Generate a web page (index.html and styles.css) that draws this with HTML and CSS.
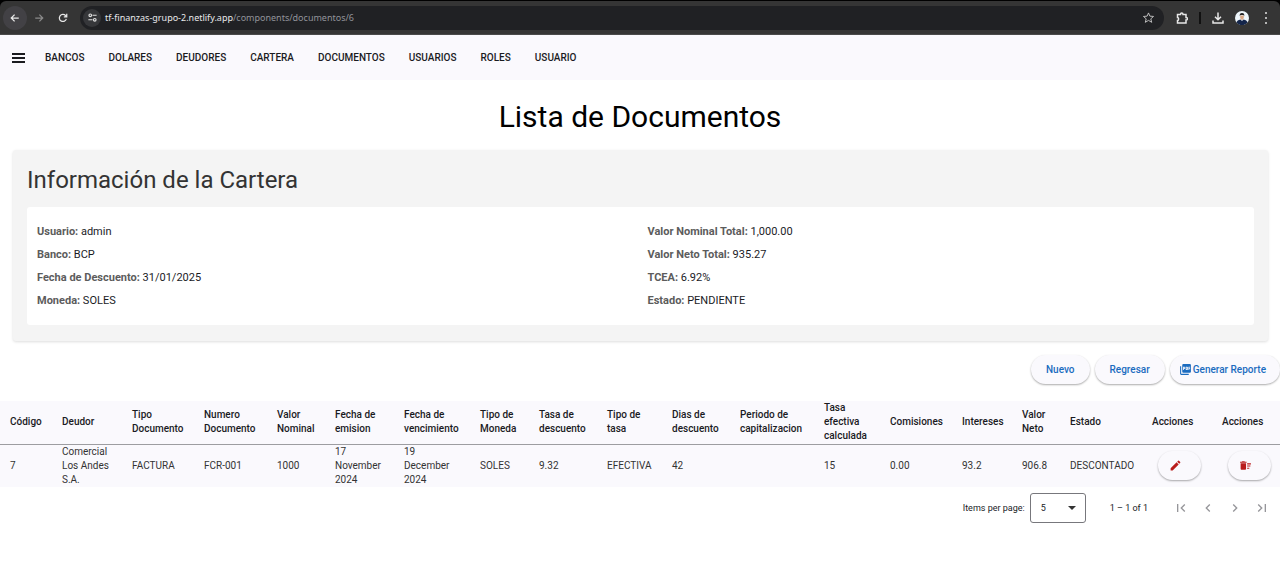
FILE: index.html
```html
<!DOCTYPE html>
<html lang="es">
<head>
<meta charset="utf-8">
<title>Lista de Documentos</title>
<link rel="stylesheet" href="styles.css">
</head>
<body>
<div class="browser">
  <div class="browser-bar">
    <button class="tool tool-back" aria-label="Atrás"><svg viewBox="0 0 24 24"><path d="M21 12H4M11 4l-8 8 8 8"/></svg></button>
    <button class="tool tool-dim" aria-label="Adelante"><svg viewBox="0 0 24 24"><path d="M3 12h17M13 4l8 8-8 8"/></svg></button>
    <button class="tool" aria-label="Recargar"><svg viewBox="0 0 24 24"><path d="M20 14a8.500 8.500 0 1 1-2-8l3 3M21 2v7h-7"/></svg></button>
    <div class="address">
      <button class="site-info" aria-label="Información del sitio"><svg viewBox="0 0 24 24"><circle cx="6" cy="6" r="3.500"/><path d="M12 6h11M1 18h11"/><circle cx="18" cy="18" r="3.500"/></svg></button>
      <span class="url"><span class="host">tf-finanzas-grupo-2.netlify.app</span>/components/documentos/6</span>
      <button class="star" aria-label="Marcador"><svg viewBox="0 0 24 24"><path d="M12 2l3 7 8 .7-6 5.200 2 7.600-7-4.200-7 4.200 2-7.600-6-5.200L9 9z"/></svg></button>
    </div>
    <button class="tool tool-ext" aria-label="Extensiones"><svg viewBox="0 0 24 24"><path d="M3 5h6c0-4 5-4 5 0h6v6c4 0 4 5 0 5v6H3v-5c3 0 3-6 0-6z"/></svg></button>
    <span class="divider"></span>
    <button class="tool tool-down" aria-label="Descargas"><svg viewBox="0 0 24 24"><path d="M12 1v14M6 9.500l6 6 6-6M2 17v5h20v-5"/></svg></button>
    <button class="avatar" aria-label="Perfil"><svg viewBox="0 0 14 14"><circle cx="7" cy="7" r="7" fill="#eef6fb"/><path d="M1.500 11.500Q2 9 5.500 8.500L7 10l1.500-1.500Q12 9 12.500 11.500A7 7 0 0 1 1.500 11.500z" fill="#14254a"/><path d="M5.200 4.500h3.600v2.200Q8.500 8.600 7 9 5.500 8.600 5.200 6.700z" fill="#d9a987"/><path d="M4.800 5.200Q4.300 2 7 2t2.200 3.200L8.500 4h-3z" fill="#222"/></svg></button>
    <button class="kebab" aria-label="Menú"><svg viewBox="0 0 4 14"><circle cx="2" cy="2" r="1"/><circle cx="2" cy="7" r="1"/><circle cx="2" cy="12" r="1"/></svg></button>
  </div>
</div>
<nav class="nav">
  <button class="menu" aria-label="Abrir menú"><svg viewBox="0 0 13 10"><path d="M0 1h13M0 5h13M0 9h13"/></svg></button>
  <a href="#">BANCOS</a><a href="#">DOLARES</a><a href="#">DEUDORES</a><a href="#">CARTERA</a><a href="#">DOCUMENTOS</a><a href="#">USUARIOS</a><a href="#">ROLES</a><a href="#">USUARIO</a>
</nav>
<main>
  <h1>Lista de Documentos</h1>
  <section class="card">
    <h2>Información de la Cartera</h2>
    <div class="info">
      <div class="info-col">
        <p><strong>Usuario:</strong> admin</p>
        <p><strong>Banco:</strong> BCP</p>
        <p><strong>Fecha de Descuento:</strong> 31/01/2025</p>
        <p><strong>Moneda:</strong> SOLES</p>
      </div>
      <div class="info-col">
        <p><strong>Valor Nominal Total:</strong> 1,000.00</p>
        <p><strong>Valor Neto Total:</strong> 935.27</p>
        <p><strong>TCEA:</strong> 6.92%</p>
        <p><strong>Estado:</strong> PENDIENTE</p>
      </div>
    </div>
  </section>
  <div class="actions">
    <button class="pill">Nuevo</button>
    <button class="pill">Regresar</button>
    <button class="pill pill-icon"><svg viewBox="0 0 24 24"><path fill="currentColor" fill-rule="evenodd" d="M20 2H8a2 2 0 0 0-2 2v12a2 2 0 0 0 2 2h12a2 2 0 0 0 2-2V4a2 2 0 0 0-2-2zm-8.500 7.500A1.500 1.500 0 0 1 10 11H9v2H7.500V7H10a1.500 1.500 0 0 1 1.500 1.500zm5 2A1.500 1.500 0 0 1 15 13h-2.500V7H15a1.500 1.500 0 0 1 1.500 1.500zm4-3H19v1h1.500V11H19v2h-1.500V7h3zM9 9.500h1v-1H9zM4 6H2v14a2 2 0 0 0 2 2h14v-2H4zm10 5.500h1v-3h-1z"/></svg>Generar Reporte</button>
  </div>
  <table class="docs">
    <colgroup>
      <col class="c-code"><col class="c-debtor"><col class="c-type"><col class="c-number"><col class="c-nominal"><col class="c-issue"><col class="c-due"><col class="c-currency"><col class="c-rate"><col class="c-ratetype"><col class="c-days"><col class="c-period"><col class="c-effective"><col class="c-fees"><col class="c-interest"><col class="c-net"><col class="c-state"><col class="c-edit"><col class="c-delete">
    </colgroup>
    <thead>
      <tr><th>Código</th><th>Deudor</th><th>Tipo Documento</th><th>Numero Documento</th><th>Valor Nominal</th><th>Fecha de emision</th><th>Fecha de vencimiento</th><th>Tipo de Moneda</th><th>Tasa de descuento</th><th>Tipo de tasa</th><th>Dias de descuento</th><th>Periodo de capitalizacion</th><th>Tasa efectiva calculada</th><th>Comisiones</th><th>Intereses</th><th>Valor Neto</th><th>Estado</th><th>Acciones</th><th>Acciones</th></tr>
    </thead>
    <tbody>
      <tr><td>7</td><td>Comercial Los Andes S.A.</td><td>FACTURA</td><td>FCR-001</td><td>1000</td><td>17 November 2024</td><td>19 December 2024</td><td>SOLES</td><td>9.32</td><td>EFECTIVA</td><td>42</td><td></td><td>15</td><td>0.00</td><td>93.2</td><td>906.8</td><td>DESCONTADO</td>
      <td class="act"><button class="round" aria-label="Editar"><svg viewBox="0 0 24 24"><path d="M3 17.250V21h3.750L17.810 9.940l-3.750-3.750zM20.710 7.040a1 1 0 0 0 0-1.410l-2.340-2.340a1 1 0 0 0-1.410 0l-1.830 1.830 3.750 3.750z"/></svg></button></td>
      <td class="act"><button class="round" aria-label="Eliminar"><svg viewBox="0 0 24 24"><path d="M15 16h4v2h-4zm0-8h7v2h-7zm0 4h6v2h-6zM3 18c0 1.100.9 2 2 2h6c1.100 0 2-.9 2-2V8H3zM14 5h-3l-1-1H6L5 5H2v2h12z"/></svg></button></td></tr>
    </tbody>
  </table>
  <div class="paginator">
    <label for="size">Items per page:</label>
    <div class="select"><select id="size"><option>5</option><option>10</option></select><svg viewBox="0 0 8 4"><path d="M0 0h8L4 4z"/></svg></div>
    <span class="range">1 – 1 of 1</span>
    <div class="pages">
      <button aria-label="Primera página"><svg viewBox="0 0 24 24"><path d="M18.410 16.590L13.820 12l4.590-4.590L17 6l-6 6 6 6zM6 6h2v12H6z"/></svg></button>
      <button aria-label="Página anterior"><svg viewBox="0 0 24 24"><path d="M15.410 7.410L14 6l-6 6 6 6 1.410-1.410L10.830 12z"/></svg></button>
      <button aria-label="Página siguiente"><svg viewBox="0 0 24 24"><path d="M10 6L8.590 7.410 13.170 12l-4.580 4.590L10 18l6-6z"/></svg></button>
      <button aria-label="Última página"><svg viewBox="0 0 24 24"><path d="M5.590 7.410L10.180 12l-4.590 4.590L7 18l6-6-6-6zM16 6h2v12h-2z"/></svg></button>
    </div>
  </div>
</main>
</body>
</html>
```
FILE: styles.css
```css
* { box-sizing: border-box; }
body { margin: 0; background: #fff; color: #1a1b1f; font-family: Roboto, "Liberation Sans", sans-serif; }
h1, h2, p { margin: 0; font-weight: 400; }
button { border: 0; padding: 0; background: none; font-family: inherit; color: inherit; }
svg { display: block; flex: none; }

.browser { background: #000; padding-top: 1px; }
.browser-bar { display: flex; align-items: center; height: 34px; padding: 0 12px 0 3px; background: #353535; border-bottom: 1px solid #4a4a4a; border-radius: 6px 6px 0 0; color: #e8e8e8; }
.tool { display: flex; align-items: center; justify-content: center; width: 24px; height: 24px; border-radius: 50%; }
.tool svg { width: 10px; height: 10px; fill: none; stroke: currentColor; stroke-width: 3; }
.tool-back { background: #424145; }
.tool-dim { color: #8a8a8a; }
.address { flex: 1; display: flex; align-items: center; height: 24px; margin: 0 6px 0 5px; padding: 0 10px 0 3px; border-radius: 12px; background: #202124; }
.site-info { display: flex; align-items: center; justify-content: center; width: 18px; height: 18px; border-radius: 50%; background: #36373a; }
.site-info svg { width: 9px; height: 9px; fill: none; stroke: #e0e0e0; stroke-width: 3; }
.url { flex: 1; margin-left: 4px; font: 9px "Noto Sans", sans-serif; color: #92939a; }
.host { color: #e8e8ea; }
.star svg { width: 11px; height: 11px; fill: none; stroke: #c8c8c8; stroke-width: 2; }
.tool-ext svg { width: 12px; height: 12px; }
.divider { width: 2px; height: 12px; margin: 0 5px; background: #111; }
.tool-down svg { width: 12px; height: 12px; }
.avatar { margin: 0 15px 0 5px; }
.avatar svg { width: 14px; height: 14px; }
.kebab svg { width: 4px; height: 14px; fill: #e0e0e0; }

.nav { display: flex; align-items: center; gap: 24px; height: 45px; padding: 0 12px; background: #faf9fd; font-size: 10px; font-weight: 500; }
.menu { margin-right: -4px; }
.menu svg { width: 13px; height: 10px; stroke: #1a1b1f; stroke-width: 2; }
.nav a { color: inherit; text-decoration: none; }

h1 { padding: 17px 0 13px; font-size: 30px; line-height: 40px; text-align: center; color: #000; }
.card { margin: 0 12px 14px 13px; padding: 14px 14px 16px; border-radius: 3px; background: #f4f4f4; box-shadow: 0 1px 3px #0002; }
.card h2 { margin-bottom: 11px; font-size: 24px; line-height: 32px; color: #333; }
.info { display: grid; grid-template-columns: 1fr 1fr; gap: 14px; padding: 16px 10px; border-radius: 3px; background: #fff; font-size: 11px; }
.info-col { display: grid; gap: 6px; line-height: 17px; }
.info strong { font-weight: 700; color: #5c5c5c; }

.actions { display: flex; justify-content: flex-end; gap: 5px; margin-bottom: 17px; }
.pill { height: 29px; padding: 0 15px; border-radius: 15px; background: #faf9fd; color: #1b6cc0; font-size: 10px; font-weight: 500; box-shadow: 0 1px 2px #0005; }
.pill-icon { display: flex; align-items: center; gap: 1px; padding: 0 14px 0 9px; }
.pill-icon svg { width: 13px; height: 13px; }

.docs { width: 100%; table-layout: fixed; border-collapse: collapse; background: #faf9fd; font-size: 10px; line-height: 14px; }
.docs th, .docs td { height: 43px; padding: 0 10px; text-align: left; vertical-align: middle; }
.docs th { font-weight: 500; border-bottom: 1px solid #9d9da1; }
.docs td { color: #333; }
.docs td.act { padding-left: 16px; padding-right: 0; }
.round { display: flex; align-items: center; width: 43px; height: 29px; padding-left: 11px; border-radius: 15px; box-shadow: 0 1px 2px #0005; }
.round svg { width: 13px; height: 13px; fill: #b91c1c; }
.c-code { width: 52px; }
.c-debtor, .c-edit { width: 70px; }
.c-type, .c-fees { width: 72px; }
.c-number { width: 73px; }
.c-nominal { width: 58px; }
.c-issue { width: 69px; }
.c-due { width: 76px; }
.c-currency { width: 59px; }
.c-rate, .c-days, .c-delete { width: 68px; }
.c-ratetype { width: 65px; }
.c-period { width: 84px; }
.c-effective { width: 66px; }
.c-interest { width: 60px; }
.c-net { width: 48px; }
.c-state { width: 82px; }

.paginator { display: flex; align-items: center; justify-content: flex-end; height: 41px; padding-right: 5px; font-size: 9px; }
.select { display: flex; align-items: center; position: relative; margin: 0 24px 0 5px; }
.select select { width: 56px; height: 30px; padding: 0 10px; border: 1px solid #77777c; border-radius: 3px; background: #fff; appearance: none; font: inherit; color: inherit; }
.select svg { position: absolute; right: 10px; width: 8px; height: 4px; fill: #333; pointer-events: none; }
.pages { display: flex; margin-left: 19px; }
.pages button { display: flex; align-items: center; justify-content: center; width: 27px; height: 27px; }
.pages svg { width: 16px; height: 16px; fill: #96969a; }
```
